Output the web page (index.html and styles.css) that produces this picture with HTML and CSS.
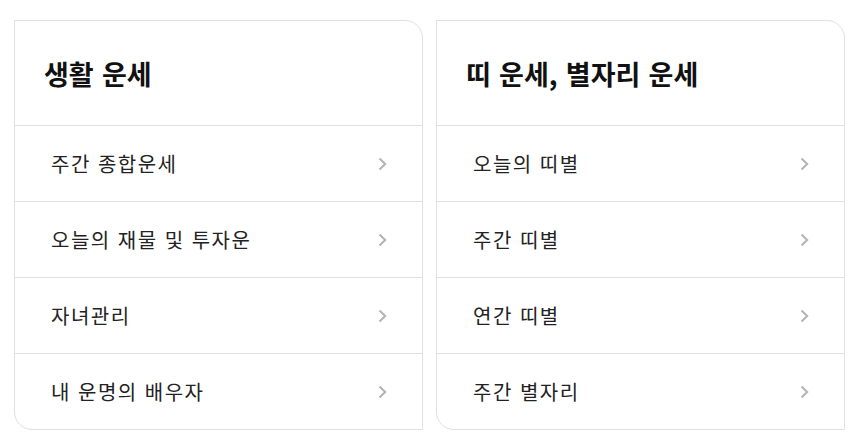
FILE: index.html
```html
<!DOCTYPE html>
<html lang="ko">
<head>
<meta charset="utf-8">
<link rel="stylesheet" href="styles.css">
</head>
<body>
<div class="wrap">
  <section class="card">
    <h2 class="title">생활 운세</h2>
    <ul class="list">
      <li class="item"><span>주간 종합운세</span><svg class="chev" viewBox="0 0 9 14"><path d="M1.5 1.5 L7.2 7 L1.5 12.5"/></svg></li>
      <li class="item"><span>오늘의 재물 및 투자운</span><svg class="chev" viewBox="0 0 9 14"><path d="M1.5 1.5 L7.2 7 L1.5 12.5"/></svg></li>
      <li class="item"><span>자녀관리</span><svg class="chev" viewBox="0 0 9 14"><path d="M1.5 1.5 L7.2 7 L1.5 12.5"/></svg></li>
      <li class="item"><span>내 운명의 배우자</span><svg class="chev" viewBox="0 0 9 14"><path d="M1.5 1.5 L7.2 7 L1.5 12.5"/></svg></li>
    </ul>
  </section>
  <section class="card">
    <h2 class="title">띠 운세, 별자리 운세</h2>
    <ul class="list">
      <li class="item"><span>오늘의 띠별</span><svg class="chev" viewBox="0 0 9 14"><path d="M1.5 1.5 L7.2 7 L1.5 12.5"/></svg></li>
      <li class="item"><span>주간 띠별</span><svg class="chev" viewBox="0 0 9 14"><path d="M1.5 1.5 L7.2 7 L1.5 12.5"/></svg></li>
      <li class="item"><span>연간 띠별</span><svg class="chev" viewBox="0 0 9 14"><path d="M1.5 1.5 L7.2 7 L1.5 12.5"/></svg></li>
      <li class="item"><span>주간 별자리</span><svg class="chev" viewBox="0 0 9 14"><path d="M1.5 1.5 L7.2 7 L1.5 12.5"/></svg></li>
    </ul>
  </section>
</div>
</body>
</html>
```

FILE: styles.css
```css
* { box-sizing: border-box; }
html, body { margin: 0; padding: 0; background: #fff; }
body {
  font-family: "Noto Sans CJK KR", "Noto Sans", sans-serif;
  color: #222;
}
.wrap {
  display: flex;
  gap: 13px;
  padding: 20px 0 0 14px;
}
.card {
  width: 409px;
  height: 410px;
  border: 1px solid #e0e0e0;
  border-radius: 0 18px 0 18px;
  display: flex;
  flex-direction: column;
}
.title {
  margin: 0;
  height: 105px;
  flex: none;
  display: flex;
  align-items: center;
  padding-left: 29px;
  font-size: 27px;
  font-weight: 700;
  color: #111;
  word-spacing: 0.7px;
  border-bottom: 1px solid #e0e0e0;
}
.list {
  list-style: none;
  margin: 0;
  padding: 0;
}
.item {
  height: 76px;
  display: flex;
  align-items: center;
  justify-content: space-between;
  padding: 0 35px 0 36px;
  font-size: 20px;
  letter-spacing: 1.5px;
  color: #222;
  border-bottom: 1px solid #e0e0e0;
}
.item:last-child { border-bottom: none; height: 75px; }
.chev {
  width: 9px;
  height: 14px;
  fill: none;
  stroke: #b3b3b3;
  stroke-width: 2;
}
```
